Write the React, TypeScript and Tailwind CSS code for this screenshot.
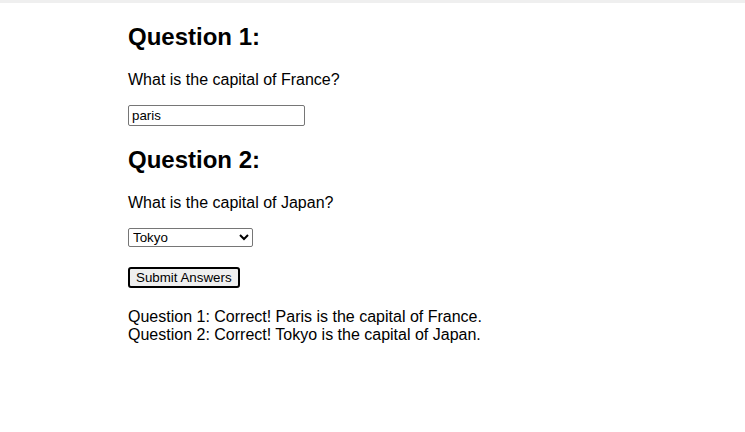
import React, { useState } from "react";

export default function App() {
  const [q1, setQ1] = useState("paris");
  const [q2, setQ2] = useState("Tokyo");

  return (
    <div className="min-h-[432px] bg-white font-['Liberation_Sans',Arial,sans-serif] text-black">
      <div className="h-[3px] bg-[#efefef]" />
      <div className="pl-[128px]">
        <h2 className="mt-[20px] text-[24px] font-bold leading-[1.15]">Question 1:</h2>
        <p className="mt-[20px] text-[16px] leading-[1.15]">What is the capital of France?</p>
        <input
          type="text"
          value={q1}
          onChange={(e) => setQ1(e.target.value)}
          className="mt-[16px] block h-[21px] w-[177px] rounded-[2px] border border-[#767676] bg-white px-[3px] text-[13.33px] leading-none outline-none"
        />

        <h2 className="mt-[20px] text-[24px] font-bold leading-[1.15]">Question 2:</h2>
        <p className="mt-[20px] text-[16px] leading-[1.15]">What is the capital of Japan?</p>
        <select
          value={q2}
          onChange={(e) => setQ2(e.target.value)}
          className="mt-[16px] block h-[19px] w-[125px] rounded-[2px] border border-[#767676] bg-white text-[13.33px]"
        >
          <option>Tokyo</option>
          <option>Kyoto</option>
          <option>Osaka</option>
        </select>

        <button className="mt-[20px] block h-[21px] rounded-[3px] border-2 border-black bg-[#efefef] px-[6px] text-[13.33px] leading-none">
          Submit Answers
        </button>

        <div className="mt-[20px] text-[16px] leading-[1.15]">
          <div>Question 1: Correct! Paris is the capital of France.</div>
          <div>Question 2: Correct! Tokyo is the capital of Japan.</div>
        </div>
      </div>
    </div>
  );
}
